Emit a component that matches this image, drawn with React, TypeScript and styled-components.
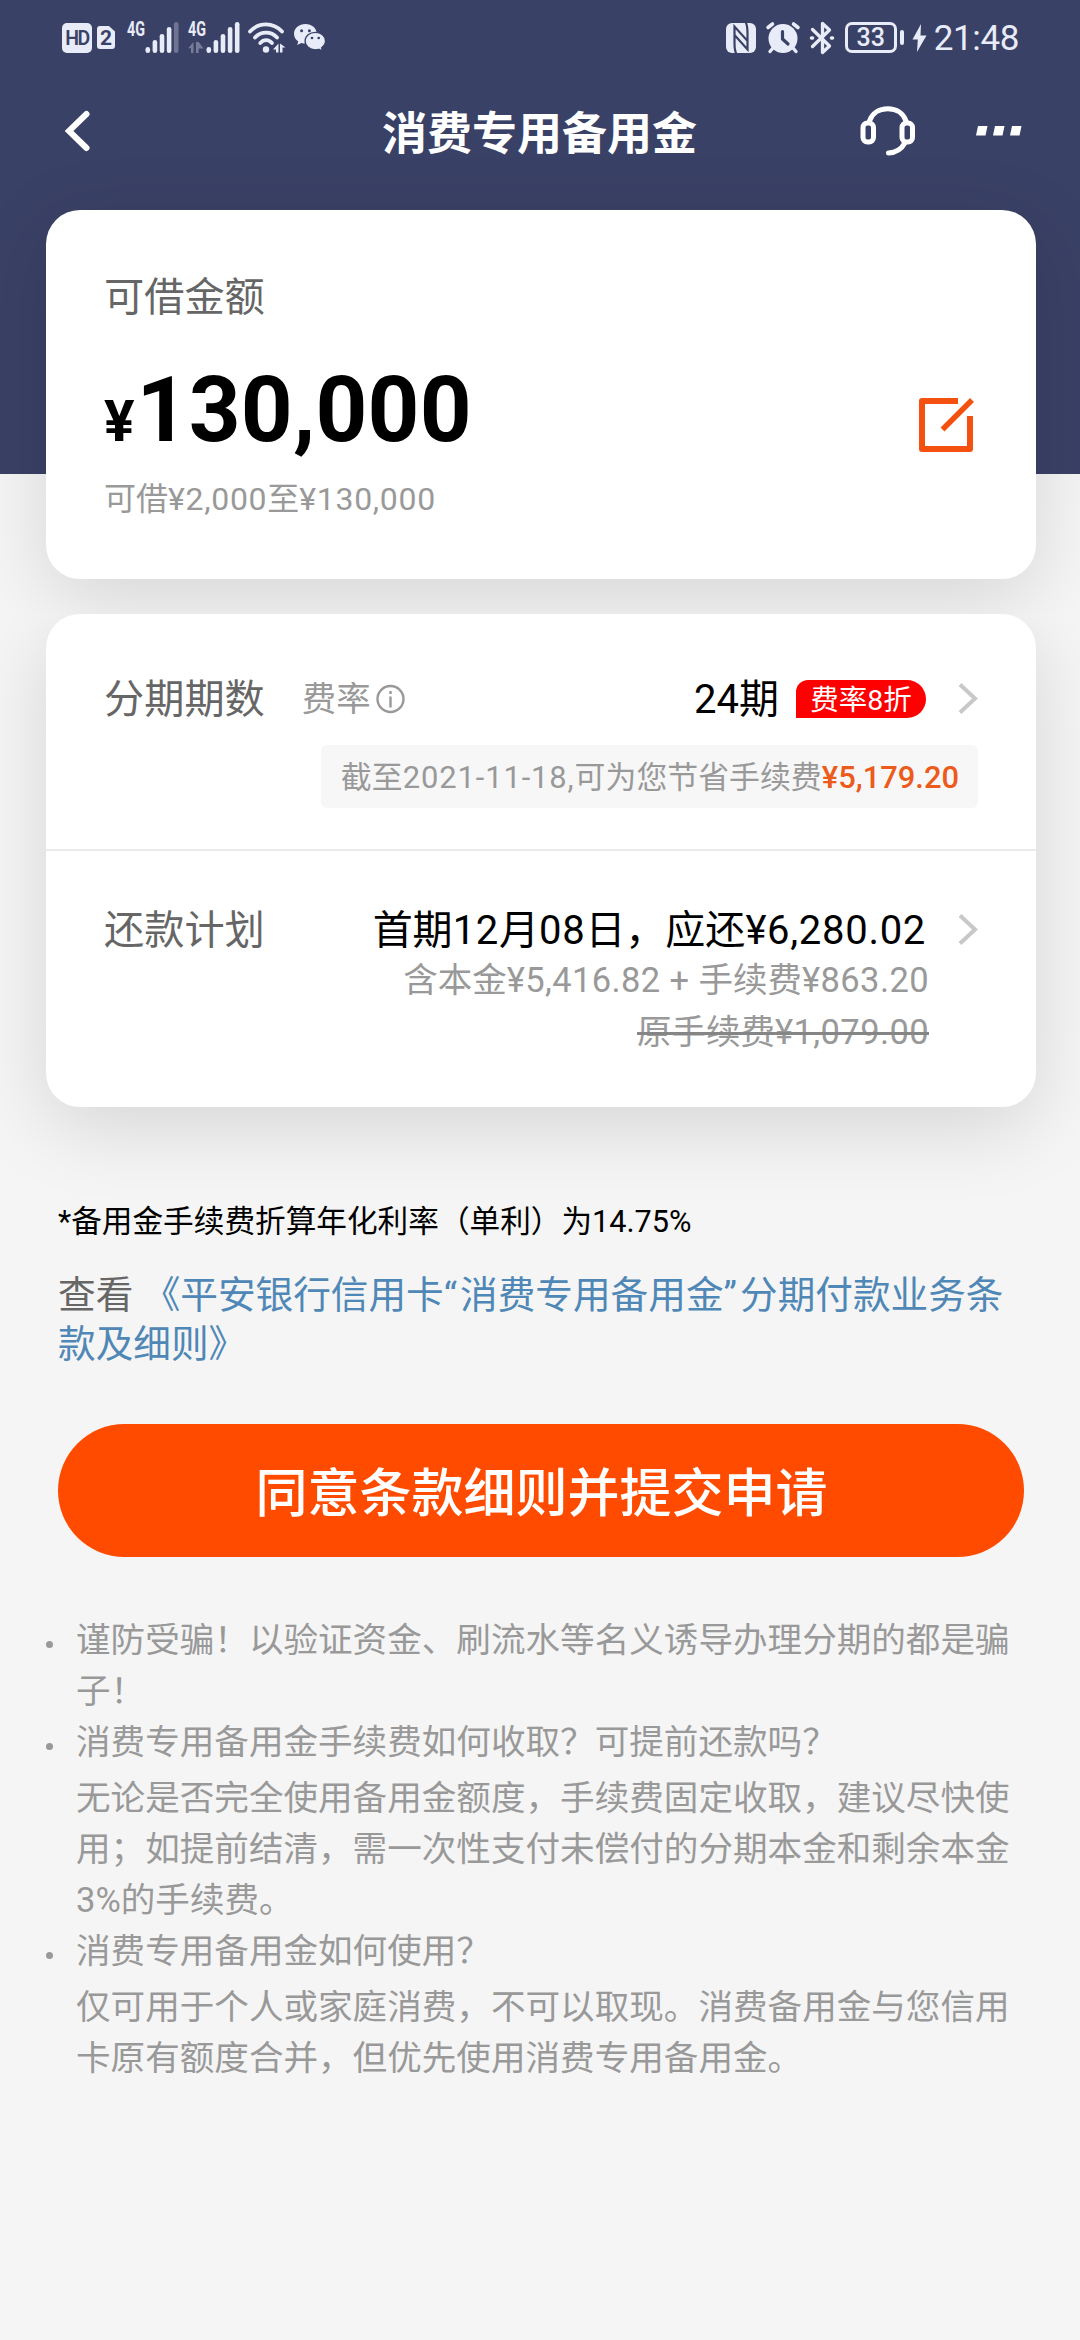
import React from 'react';
import styled, { createGlobalStyle } from 'styled-components';

const GlobalStyle = createGlobalStyle`
  *, *::before, *::after { box-sizing: border-box; }
  body {
    margin: 0;
    background: #f5f5f5;
    font-family: Roboto, 'Noto Sans CJK SC', sans-serif;
    text-spacing-trim: space-all;
  }
  svg { display: block; flex: none; overflow: visible; }
`;

const Page = styled.div`
  width: 1080px;
  min-height: 2340px;
  background: #f5f5f5;
  color: #000;
`;

const Hero = styled.header`
  position: relative;
  z-index: 1;
  height: 614px;
  overflow: hidden;
  background: linear-gradient(#3a4166 474px, #f5f5f5 474px);
`;

const StatusBar = styled.div`
  height: 75px;
  padding: 0 61px 0 62px;
  display: flex;
  justify-content: space-between;
  align-items: center;
  color: #e8ecf8;
`;

const StatusGroup = styled.div`
  display: flex;
  align-items: center;
`;

const Slot = styled.div<{ $gap?: number }>`
  display: flex;
  margin-left: ${(p) => p.$gap ?? 0}px;
`;

const HdBadge = styled.div`
  width: 30px;
  height: 30px;
  border-radius: 5px;
  background: #e8ecf8;
  color: #3a4166;
  font-size: 19.5px;
  font-weight: 600;
  line-height: 31px;
  letter-spacing: -1.5px;
  text-align: center;
`;

const SimBadge = styled.div`
  width: 18px;
  height: 23px;
  margin-left: 5px;
  border-radius: 3px;
  background: #e8ecf8;
  color: #3a4166;
  clip-path: polygon(0 0, 66% 0, 100% 24%, 100% 100%, 0 100%);
  font-size: 21px;
  font-weight: 700;
  line-height: 24px;
  text-align: center;
`;

const Battery = styled.div`
  width: 52px;
  height: 31px;
  border: 3px solid #e8ecf8;
  border-radius: 7px;
  font-size: 25px;
  font-weight: 500;
  line-height: 26px;
  text-align: center;
`;

const BatteryTip = styled.div`
  width: 4px;
  height: 15px;
  margin-left: 3px;
  border-radius: 2px;
  background: #e8ecf8;
`;

const Clock = styled.span`
  margin-left: 7px;
  font-size: 35px;
  line-height: 40px;
  letter-spacing: -0.4px;
  padding-top: 2px;
`;

const NavBar = styled.nav`
  height: 112px;
  padding: 0 57px 0 61px;
  display: grid;
  grid-template-columns: 1fr auto 1fr;
  align-items: center;
  color: #fff;
`;

const NavTitle = styled.h1`
  margin: 0 5px 0 0;
  font-size: 45px;
  font-weight: 700;
  line-height: 60px;
  padding-top: 7px;
`;

const NavActions = styled.div`
  display: flex;
  align-items: center;
  justify-content: flex-end;
  gap: 60px;
`;

const Card = styled.section`
  width: 990px;
  margin: 0 0 0 46px;
  border-radius: 34px;
  background: #fff;
  box-shadow: 0 20px 80px rgba(0, 0, 0, 0.13);
`;

const AmountCard = styled(Card)`
  height: 369px;
  margin-top: 23px;
  padding: 62px 59px 0 58px;
`;

const Label = styled.span`
  padding-top: 2px;
  font-size: 40.2px;
  line-height: 50px;
  color: #666;
  white-space: nowrap;
`;

const AmountRow = styled.div`
  display: flex;
  justify-content: space-between;
  align-items: center;
  height: 100px;
  margin-top: 39px;
`;

const Amount = styled.div`
  padding-top: 10px;
  font-size: 90.5px;
  font-weight: 700;
  line-height: 100px;
  letter-spacing: 0.2px;
`;

const Currency = styled.span`
  font-size: 57px;
  letter-spacing: 2px;
`;

const EditButton = styled.button`
  margin: 28px 2px 0 0;
  padding: 0;
  border: 0;
  background: none;
`;

const AmountRange = styled.div`
  margin-top: 18px;
  font-size: 32px;
  line-height: 40px;
  color: #999;
`;

const Num = styled.span<{ $track?: number }>`
  letter-spacing: ${(p) => p.$track ?? 0.7}px;
`;

const PlanCard = styled(Card)`
  height: 493px;
`;

const PlanSection = styled.div<{ $top: number; $height: number }>`
  height: ${(p) => p.$height}px;
  padding: ${(p) => p.$top}px 58px 0 58px;
  display: flex;
  flex-direction: column;
`;

const Divider = styled.hr`
  height: 2px;
  margin: 0;
  border: 0;
  background: #ebebeb;
`;

const Row = styled.div`
  display: flex;
  align-items: center;
  height: 50px;
`;

const RateHint = styled.span`
  display: flex;
  align-items: center;
  gap: 5px;
  margin-left: 37px;
  font-size: 34.4px;
  line-height: 50px;
  color: #999;
`;

const Value = styled.span`
  margin-left: auto;
  padding-top: 2px;
  font-size: 40px;
  line-height: 50px;
  white-space: nowrap;
`;

const RateBadge = styled.span`
  width: 130px;
  height: 38px;
  margin-left: 17px;
  border-radius: 12px 19px 19px 0;
  background: #fe0000;
  color: #fff;
  font-size: 28.5px;
  line-height: 41px;
  text-align: center;
`;

const ArrowSlot = styled.span`
  margin: 0 0 2px 32px;
`;

const SavingNote = styled.div`
  align-self: flex-end;
  height: 63px;
  margin-top: 21px;
  padding: 0 19px 0 20px;
  border-radius: 6px;
  background: #f7f7f7;
  color: #999;
  font-size: 30.9px;
  line-height: 65px;
  white-space: nowrap;
`;

const SavingAmount = styled.em`
  font-style: normal;
  font-weight: 500;
  color: #ec5a1c;
`;

const Detail = styled.div<{ $struck?: boolean }>`
  align-self: flex-end;
  margin: ${(p) => (p.$struck ? '2px' : '0')} 49px 0 0;
  font-size: 34.5px;
  line-height: 50px;
  color: #999;
  white-space: nowrap;
  ${(p) => p.$struck && 'text-decoration: line-through 3px #858585;'}
`;

const Footnote = styled.p`
  margin: 0;
  padding: 95px 58px 0;
  font-size: 30.65px;
  line-height: 40px;
`;

const Terms = styled.p`
  margin: 29px 56px 0 58px;
  font-size: 37.65px;
  line-height: 49px;
  color: #666;
`;

const TermsLink = styled.a`
  color: #4f87b6;
`;

const Quote = styled.span`
  letter-spacing: 3px;
`;

const SubmitButton = styled.button`
  display: block;
  width: 966px;
  height: 133px;
  margin: 55px 0 0 58px;
  padding: 0 0 3px 1px;
  border: 0;
  border-radius: 67px;
  background: #ff4b00;
  color: #fff;
  font-family: inherit;
  font-size: 52px;
  font-weight: 500;
`;

const NoticeList = styled.ul`
  margin: 58px 65px 0 46px;
  padding: 0;
  list-style: none;
  font-size: 34.6px;
  line-height: 51px;
  color: #999;
`;

const NoticeItem = styled.li`
  display: grid;
  grid-template-columns: 7px 1fr;
  column-gap: 23px;

  &::before {
    content: '';
    width: 7px;
    height: 7px;
    margin-top: 26px;
    border-radius: 50%;
    background: #999;
  }
`;

const Answer = styled.p`
  margin: 5px 0 0;
`;

function Signal({ weak, arrows }: { weak?: boolean; arrows?: boolean }) {
  const tops = [26, 19, 13, 6, 1];
  return (
    <svg width="52" height="33" viewBox="0 0 52 33" fill="#e8ecf8">
      <text x="0" y="15" fontFamily="Roboto, sans-serif" fontWeight="700" fontSize="20" textLength="18" lengthAdjust="spacingAndGlyphs">
        4G
      </text>
      {arrows && (
        <path d="M0 27.500l5.500-6.500v11H3v-5zM8 21h2.600l5 6.500H10.600V32H8z" opacity="0.35" />
      )}
      {tops.map((top, i) => (
        <rect
          key={top}
          x={18.5 + i * 7.1}
          y={top}
          width="4.6"
          height={32 - top}
          rx="2.3"
          opacity={weak && i === 4 ? 0.3 : 1}
        />
      ))}
    </svg>
  );
}

function WifiIcon() {
  return (
    <svg width="40" height="33" viewBox="0 0 40 33" fill="none" stroke="#e8ecf8" strokeWidth="3.8" strokeLinecap="round">
      <path d="M2 10.500C11 1 25 1 34 10.500M7 16.500c6-6.500 16-6.500 22 0M12.300 22c3.500-3.800 8.400-3.800 11.600 0" />
      <circle cx="18" cy="28.500" r="3.200" fill="#e8ecf8" stroke="none" />
      <path d="M25 28.500l5.500-6v9h-2.500v-3zM32 22.500l5.500 4h-3v5H32z" fill="#e8ecf8" stroke="none" />
    </svg>
  );
}

function WechatIcon() {
  return (
    <svg width="32" height="27" viewBox="0 0 32 27">
      <path
        d="M11.500 0C5 0 0 4.300 0 9.800c0 3.200 1.700 5.900 4.300 7.700L3.200 21l4.100-2.100c1.400.4 2.800.6 4.200.6 6.300 0 11.300-4.300 11.300-9.700S17.800 0 11.500 0z"
        fill="#e8ecf8"
      />
      <path
        d="M21.400 8.300c-5.800 0-10.300 3.900-10.300 8.800s4.600 8.700 10.300 8.700c1.200 0 2.300-.2 3.400-.5l3.700 1.700-.9-3.200c2.300-1.600 3.900-4 3.900-6.700 0-4.900-4.500-8.800-10.100-8.800z"
        fill="#e8ecf8"
        stroke="#3a4166"
        strokeWidth="1.300"
      />
      <g fill="#3a4166">
        <circle cx="7.600" cy="6.800" r="1.500" />
        <circle cx="15.400" cy="6.800" r="1.500" />
        <circle cx="18" cy="14" r="1.300" />
        <circle cx="24.700" cy="14" r="1.300" />
      </g>
    </svg>
  );
}

function NfcIcon() {
  return (
    <svg width="30" height="30" viewBox="0 0 30 30">
      <rect width="30" height="30" rx="6" fill="#e8ecf8" />
      <path d="M10.500 31C8.500 28 8.500 24 8.500 20V3.500L21.500 18V9.500M19.500-1c2 3 2 7 2 11v16.500L8.500 12" fill="none" stroke="#3a4166" strokeWidth="2.200" />
    </svg>
  );
}

function AlarmIcon() {
  return (
    <svg width="34" height="32" viewBox="0 0 34 32" stroke="#e8ecf8" strokeLinecap="round" strokeLinejoin="round" fill="none">
      <circle cx="17" cy="16.500" r="14.500" fill="#e8ecf8" stroke="none" />
      <path d="M2 5.500L6.500 2M32 5.500L27.500 2" strokeWidth="3.600" />
      <path d="M7 26l-3 3.500M27 26l3 3.500" strokeWidth="3.400" />
      <path d="M16.500 9.500v7.500l5.500 5" stroke="#3a4166" strokeWidth="3.200" />
    </svg>
  );
}

function BluetoothIcon() {
  return (
    <svg width="24" height="34" viewBox="0 0 24 34" fill="none" stroke="#e8ecf8" strokeWidth="3.300" strokeLinejoin="round" strokeLinecap="round">
      <path d="M2.500 8.500L19.500 25l-7 6.500v-29l7 6.500-17 16.500" />
      <path d="M1.500 17h1M21.500 17h1" strokeWidth="3.600" />
    </svg>
  );
}

function BoltIcon() {
  return (
    <svg width="15" height="28" viewBox="0 0 15 28" fill="#e8ecf8">
      <path d="M9 0L.5 15.500h5.300L5 28l9.500-16.500H8.500z" />
    </svg>
  );
}

function BackIcon() {
  return (
    <svg width="30" height="46" viewBox="0 0 30 46" fill="none" stroke="#fff" strokeWidth="6" strokeLinecap="round">
      <path d="M25.500 6L8 23l17.500 17" />
    </svg>
  );
}

function HeadsetIcon() {
  return (
    <svg width="56" height="50" viewBox="0 0 56 50" fill="none" stroke="#fff" strokeWidth="5" strokeLinecap="round">
      <path d="M9.500 15C12 7.500 19 2.800 27.800 2.800S43.500 7.500 46 15" />
      <rect x="3" y="17" width="10.500" height="19" rx="4.500" />
      <rect x="42" y="17" width="10.500" height="19" rx="4.500" />
      <path d="M44.500 37.500C41.500 43 36 46.500 28.500 47" />
    </svg>
  );
}

function MoreIcon() {
  return (
    <svg width="47" height="10" viewBox="0 0 47 10" fill="#fff">
      {[0, 17, 34].map((x) => (
        <path key={x} d={`M${x + 2} 0h9.500l-2 9.500H${x}z`} />
      ))}
    </svg>
  );
}

function EditIcon() {
  return (
    <svg width="56" height="54" viewBox="0 0 56 54" fill="none" stroke="#f4500f" strokeWidth="6">
      <path d="M39 3H3v48h48V18" strokeLinejoin="round" />
      <path d="M23.500 31.500L53 2" strokeWidth="5.500" />
    </svg>
  );
}

function InfoIcon() {
  return (
    <svg width="29" height="29" viewBox="0 0 29 29" fill="none" stroke="#999" strokeWidth="2.400">
      <circle cx="14.500" cy="14" r="13" />
      <path d="M14.500 11.500v11M14.500 6v3" />
    </svg>
  );
}

function ChevronIcon() {
  return (
    <svg width="20" height="33" viewBox="0 0 20 33" fill="none" stroke="#c8c8c8" strokeWidth="4">
      <path d="M2 2.500l15 14-15 14" />
    </svg>
  );
}

export default function App() {
  return (
    <Page>
      <GlobalStyle />
      <Hero>
        <StatusBar>
          <StatusGroup>
            <HdBadge>HD</HdBadge>
            <SimBadge>2</SimBadge>
            <Slot $gap={12}><Signal weak /></Slot>
            <Slot $gap={9}><Signal arrows /></Slot>
            <Slot $gap={8}><WifiIcon /></Slot>
            <Slot $gap={6}><WechatIcon /></Slot>
          </StatusGroup>
          <StatusGroup>
            <NfcIcon />
            <Slot $gap={10}><AlarmIcon /></Slot>
            <Slot $gap={10}><BluetoothIcon /></Slot>
            <Slot $gap={11}><Battery>33</Battery></Slot>
            <BatteryTip />
            <Slot $gap={8}><BoltIcon /></Slot>
            <Clock>21:48</Clock>
          </StatusGroup>
        </StatusBar>
        <NavBar>
          <BackIcon />
          <NavTitle>消费专用备用金</NavTitle>
          <NavActions>
            <HeadsetIcon />
            <MoreIcon />
          </NavActions>
        </NavBar>
        <AmountCard>
          <Row><Label>可借金额</Label></Row>
          <AmountRow>
            <Amount><Currency>¥</Currency>130,000</Amount>
            <EditButton aria-label="编辑"><EditIcon /></EditButton>
          </AmountRow>
          <AmountRange>可借<Num>¥2,000</Num>至<Num>¥130,000</Num></AmountRange>
        </AmountCard>
      </Hero>

      <PlanCard>
        <PlanSection $top={60} $height={235}>
          <Row>
            <Label>分期期数</Label>
            <RateHint>费率<InfoIcon /></RateHint>
            <Value>24期</Value>
            <RateBadge>费率8折</RateBadge>
            <ArrowSlot><ChevronIcon /></ArrowSlot>
          </Row>
          <SavingNote>
            截至<Num $track={0.9}>2021-11-18,</Num>可为您节省手续费<SavingAmount>¥5,179.20</SavingAmount>
          </SavingNote>
        </PlanSection>
        <Divider />
        <PlanSection $top={54} $height={256}>
          <Row>
            <Label>还款计划</Label>
            <Value>首期<Num>12</Num>月<Num>08</Num>日，应还<Num>¥6,280.02</Num></Value>
            <ArrowSlot><ChevronIcon /></ArrowSlot>
          </Row>
          <Detail>含本金<Num $track={0.4}>¥5,416.82 + </Num>手续费<Num $track={0.4}>¥863.20</Num></Detail>
          <Detail $struck>原手续费<Num $track={0.4}>¥1,079.00</Num></Detail>
        </PlanSection>
      </PlanCard>

      <Footnote>*备用金手续费折算年化利率（单利）为14.75%</Footnote>
      <Terms>
        查看 <TermsLink>《平安银行信用卡<Quote>“</Quote>消费专用备用金<Quote>”</Quote>分期付款业务条款及细则》</TermsLink>
      </Terms>
      <SubmitButton>同意条款细则并提交申请</SubmitButton>

      <NoticeList>
        <NoticeItem>
          <div>谨防受骗！以验证资金、刷流水等名义诱导办理分期的都是骗子！</div>
        </NoticeItem>
        <NoticeItem>
          <div>
            消费专用备用金手续费如何收取？可提前还款吗？
            <Answer>
              无论是否完全使用备用金额度，手续费固定收取，建议尽快使用；如提前结清，需一次性支付未偿付的分期本金和剩余本金3%的手续费。
            </Answer>
          </div>
        </NoticeItem>
        <NoticeItem>
          <div>
            消费专用备用金如何使用？
            <Answer>
              仅可用于个人或家庭消费，不可以取现。消费备用金与您信用卡原有额度合并，但优先使用消费专用备用金。
            </Answer>
          </div>
        </NoticeItem>
      </NoticeList>
    </Page>
  );
}
